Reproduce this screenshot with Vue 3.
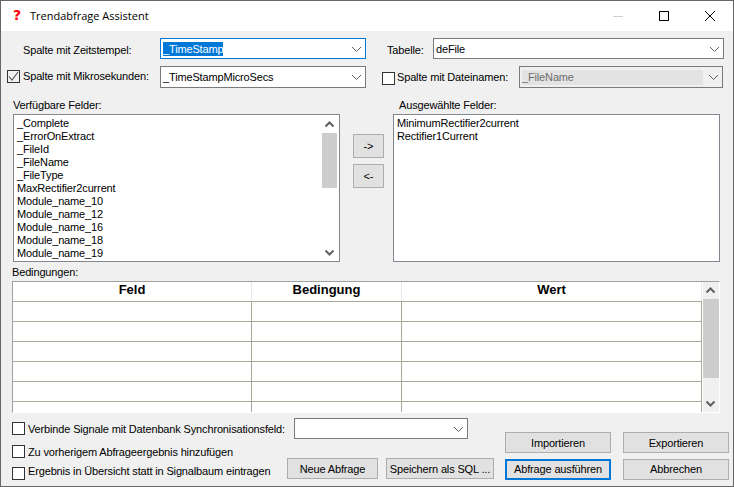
<script setup>
const available = ['_Complete', '_ErrorOnExtract', '_FileId', '_FileName', '_FileType', 'MaxRectifier2current', 'Module_name_10', 'Module_name_12', 'Module_name_16', 'Module_name_18', 'Module_name_19']
const selected = ['MinimumRectifier2current', 'Rectifier1Current']
const rows = [1, 2, 3, 4, 5, 6]
</script>

<template>
  <div class="window">
    <div class="titlebar">
      <span class="app-icon">?</span>
      <span class="title">Trendabfrage Assistent</span>
      <div class="winbtns">
        <svg width="46" height="30" viewBox="0 0 46 30"><path d="M18 15.5h10" stroke="#d0d0d0" fill="none" /></svg>
        <svg width="46" height="30" viewBox="0 0 46 30"><rect x="18.5" y="10.5" width="9" height="9" stroke="#000" fill="none" /></svg>
        <svg width="46" height="30" viewBox="0 0 46 30"><path d="M18 10l10 10M28 10l-10 10" stroke="#000" fill="none" /></svg>
      </div>
    </div>

    <div class="content">
      <div class="top-row first">
        <label class="lbl zeit">Spalte mit Zeitstempel:</label>
        <div class="combo focus w206">
          <span class="sel">_TimeStamp</span>
          <svg class="chev" width="9" height="5" viewBox="0 0 9 5"><path d="M0 0l4.5 4.5L9 0" stroke="#606060" fill="none" /></svg>
        </div>
        <label class="lbl tabelle">Tabelle:</label>
        <div class="combo w291">
          <span>deFile</span>
          <svg class="chev" width="9" height="5" viewBox="0 0 9 5"><path d="M0 0l4.5 4.5L9 0" stroke="#606060" fill="none" /></svg>
        </div>
      </div>

      <div class="top-row second">
        <span class="box checked">
          <svg width="11" height="11" viewBox="0 0 11 11"><path d="M1 5.5l3 3.5 6-8" stroke="#555" stroke-width="1.1" fill="none" /></svg>
        </span>
        <label class="lbl mikro">Spalte mit Mikrosekunden:</label>
        <div class="combo w206 tall">
          <span>_TimeStampMicroSecs</span>
          <svg class="chev" width="9" height="5" viewBox="0 0 9 5"><path d="M0 0l4.5 4.5L9 0" stroke="#606060" fill="none" /></svg>
        </div>
        <span class="box datei-box"></span>
        <label class="lbl datei">Spalte mit Dateinamen:</label>
        <div class="combo disabled w204 tall">
          <span class="disabled-field">_FileName</span>
          <svg class="chev" width="9" height="5" viewBox="0 0 9 5"><path d="M0 0l4.5 4.5L9 0" stroke="#606060" fill="none" /></svg>
        </div>
      </div>

      <div class="list-labels">
        <label class="lbl left-label">Verfügbare Felder:</label>
        <label class="lbl">Ausgewählte Felder:</label>
      </div>

      <div class="lists">
        <div class="listbox">
          <ul class="items">
            <li v-for="item in available" :key="item">{{ item }}</li>
          </ul>
          <div class="scrollbar list-scroll">
            <svg width="15" height="17" viewBox="0 0 15 17"><path d="M3.5 10.5l4-4 4 4" stroke="#606060" stroke-width="2" fill="none" /></svg>
            <div class="thumb"></div>
            <svg class="down" width="15" height="17" viewBox="0 0 15 17"><path d="M3.5 6.5l4 4 4-4" stroke="#606060" stroke-width="2" fill="none" /></svg>
          </div>
        </div>
        <div class="movers">
          <button class="btn mover">-&gt;</button>
          <button class="btn mover">&lt;-</button>
        </div>
        <div class="listbox">
          <ul class="items">
            <li v-for="item in selected" :key="item">{{ item }}</li>
          </ul>
        </div>
      </div>

      <label class="lbl cond-label">Bedingungen:</label>

      <div class="grid-wrap">
        <div class="grid">
          <div class="grid-row head">
            <div class="cell c1">Feld</div>
            <div class="cell c2">Bedingung</div>
            <div class="cell c3">Wert</div>
          </div>
          <div v-for="r in rows" :key="r" class="grid-row">
            <div class="cell c1"></div>
            <div class="cell c2"></div>
            <div class="cell c3"></div>
          </div>
        </div>
        <div class="scrollbar grid-scroll">
          <svg width="15" height="17" viewBox="0 0 15 17"><path d="M3.5 10.5l4-4 4 4" stroke="#606060" stroke-width="2" fill="none" /></svg>
          <div class="thumb grid-thumb"></div>
          <svg class="down" width="15" height="17" viewBox="0 0 15 17"><path d="M3.5 6.5l4 4 4-4" stroke="#606060" stroke-width="2" fill="none" /></svg>
        </div>
      </div>

      <div class="bottom">
        <div class="bottom-left">
          <div class="opt sync">
            <span class="box"></span>
            <label class="lbl">Verbinde Signale mit Datenbank Synchronisationsfeld:</label>
            <div class="combo w174">
              <svg class="chev" width="9" height="5" viewBox="0 0 9 5"><path d="M0 0l4.5 4.5L9 0" stroke="#606060" fill="none" /></svg>
            </div>
          </div>
          <div class="opt add">
            <span class="box"></span>
            <label class="lbl">Zu vorherigem Abfrageergebnis hinzufügen</label>
          </div>
          <div class="opt last">
            <span class="box"></span>
            <label class="lbl">Ergebnis in Übersicht statt in Signalbaum eintragen</label>
            <button class="btn neue">Neue Abfrage</button>
            <button class="btn sql">Speichern als SQL ...</button>
          </div>
        </div>
        <div class="bottom-right">
          <button class="btn action">Importieren</button>
          <button class="btn action">Exportieren</button>
          <button class="btn action primary">Abfrage ausführen</button>
          <button class="btn action">Abbrechen</button>
        </div>
      </div>
    </div>
  </div>
</template>

<style scoped>
.window {
  width: 734px;
  height: 487px;
  box-sizing: border-box;
  border: 1px solid #666;
  background: #f0f0f0;
  font-family: "Liberation Sans", Arial, sans-serif;
  font-size: 11px;
  letter-spacing: -0.15px;
  color: #000;
  overflow: hidden;
}
.titlebar {
  height: 30px;
  background: #fff;
  display: flex;
  align-items: center;
}
.app-icon {
  width: 10px;
  margin-left: 11px;
  margin-top: -2px;
  color: #f00;
  font-family: "DejaVu Sans", sans-serif;
  font-weight: bold;
  font-size: 14px;
  letter-spacing: 0;
  text-align: center;
}
.title {
  margin-left: 8px;
  margin-top: -2px;
  font-family: "Open Sans", sans-serif;
  font-size: 11px;
  letter-spacing: 0;
}
.winbtns {
  margin-left: auto;
  display: flex;
  margin-top: -1px;
}
.lbl {
  white-space: nowrap;
  flex: none;
}
.top-row {
  display: flex;
  align-items: center;
}
.first {
  padding-top: 7px;
}
.second {
  padding-top: 7px;
}
.zeit {
  margin-left: 22px;
  width: 137px;
  padding-top: 3px;
}
.tabelle {
  margin-left: 21px;
  width: 46px;
  padding-top: 3px;
}
.mikro {
  margin-left: 3px;
  width: 137px;
  padding-bottom: 2px;
}
.datei {
  margin-left: 2px;
  width: 122px;
}
.combo {
  height: 21px;
  box-sizing: border-box;
  border: 1px solid #7a7a7a;
  background: #fff;
  position: relative;
  display: flex;
  flex: none;
  align-items: center;
  padding-left: 2px;
  line-height: 14px;
}
.tall {
  height: 22px;
}
.focus {
  border-color: #0078d7;
}
.w206 { width: 206px; }
.w291 { width: 291px; }
.w204 { width: 204px; }
.w174 { width: 174px; }
.sel {
  background: #0078d7;
  color: #fff;
}
.chev {
  position: absolute;
  right: 4px;
  top: 8px;
}
.disabled {
  background: #f0f0f0;
}
.disabled-field {
  background: #e3e3e3;
  color: #6d6d6d;
  width: 181px;
  height: 15px;
}
.box {
  width: 13px;
  height: 13px;
  box-sizing: border-box;
  border: 1px solid #333;
  background: #fff;
  display: inline-flex;
  flex: none;
}
.checked {
  margin-left: 6px;
  margin-bottom: 2px;
  background: #f0f0f0;
}
.datei-box {
  margin-left: 16px;
  margin-top: 2px;
}
.list-labels {
  display: flex;
  padding: 10px 0 0 12px;
  height: 16px;
  line-height: 15px;
}
.left-label {
  width: 386px;
}
.lists {
  display: flex;
  margin-left: 12px;
}
.listbox {
  width: 327px;
  height: 148px;
  box-sizing: border-box;
  border: 1px solid #828790;
  background: #fff;
  position: relative;
  overflow: hidden;
}
.items {
  list-style: none;
  margin: 0;
  padding: 2px 0 0 3px;
  line-height: 13px;
}
.items li {
  height: 13px;
  white-space: nowrap;
}
.scrollbar {
  display: flex;
  flex-direction: column;
  width: 15px;
}
.list-scroll {
  position: absolute;
  right: 2px;
  top: 1px;
  height: 145px;
}
.thumb {
  background: #cdcdcd;
  height: 55px;
}
.down {
  margin-top: auto;
}
.movers {
  width: 53px;
  display: flex;
  flex-direction: column;
  align-items: center;
  gap: 6px;
  padding: 20px 0 0 4px;
  box-sizing: border-box;
}
.btn {
  font: inherit;
  letter-spacing: inherit;
  color: #000;
  background: #e1e1e1;
  border: 1px solid #adadad;
  padding: 0;
  box-sizing: border-box;
  white-space: nowrap;
}
.mover {
  width: 31px;
  height: 24px;
}
.cond-label {
  display: block;
  margin: 3px 0 0 11px;
  height: 15px;
  line-height: 15px;
}
.grid-wrap {
  display: flex;
  margin: 1px 0 0 11px;
  width: 708px;
  height: 132px;
  box-sizing: border-box;
  border-top: 1px solid #a0a0a0;
  border-left: 1px solid #a0a0a0;
  border-right: 1px solid #fff;
  border-bottom: 1px solid #fff;
  background: #fff;
  overflow: hidden;
}
.grid {
  width: 689px;
  flex: none;
}
.grid-row {
  display: grid;
  grid-template-columns: 239px 150px 300px;
  height: 20px;
  box-sizing: border-box;
  border-bottom: 1px solid #aca899;
}
.cell {
  border-right: 1px solid #aca899;
  box-sizing: border-box;
}
.head .cell {
  border-right-color: #e8e8e8;
  font: bold 13px "Liberation Sans", Arial, sans-serif;
  letter-spacing: 0;
  text-align: center;
  line-height: 15px;
}
.grid-scroll {
  width: 16px;
  height: 130px;
  background: #f0f0f0;
  margin-left: 1px;
}
.grid-thumb {
  height: 79px;
}
.bottom {
  display: flex;
}
.bottom-left {
  width: 504px;
  flex: none;
}
.opt {
  display: flex;
  align-items: center;
  padding-left: 11px;
}
.opt .lbl {
  margin-left: 3px;
}
.sync {
  padding-top: 5px;
}
.sync .lbl {
  width: 266px;
}
.add {
  padding-top: 6px;
}
.last {
  align-items: flex-start;
}
.last .box {
  margin-top: 9px;
}
.last .lbl {
  margin-top: 7px;
  width: 259px;
}
.neue {
  width: 91px;
  height: 21px;
}
.sql {
  width: 108px;
  height: 21px;
  margin-left: 8px;
}
.bottom-right {
  display: grid;
  grid-template-columns: 106px 106px;
  column-gap: 12px;
  row-gap: 5px;
  padding-top: 19px;
}
.action {
  height: 21px;
}
.primary {
  border: 2px solid #0078d7;
}
</style>
<style>
html, body { margin: 0; padding: 0; background: #f0f0f0; }
</style>
